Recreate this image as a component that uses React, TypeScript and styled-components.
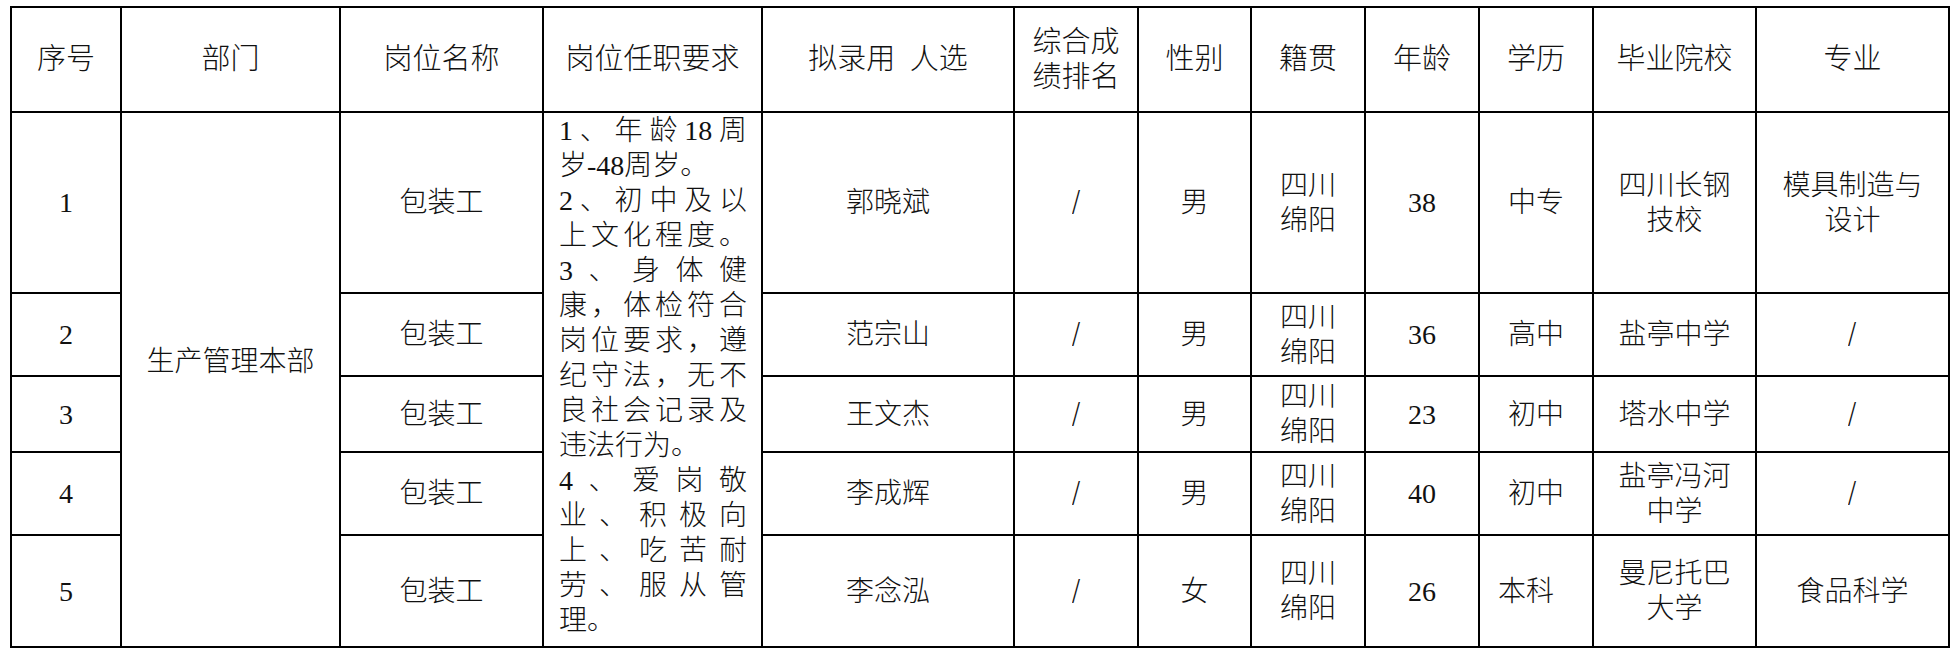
import { Fragment } from "react";
import styled, { createGlobalStyle } from "styled-components";

const GlobalStyle = createGlobalStyle`
  html, body {
    margin: 0;
    padding: 0;
    background: #fff;
  }
  body {
    font-family: "Liberation Serif", "Noto Sans CJK SC", serif;
    color: #111;
  }
`;

const Page = styled.div`
  padding: 6px 0 0 10px;
`;

// black background + 2px gaps draw the ruling of the table
const Sheet = styled.div`
  display: grid;
  grid-template-columns: 108px 217px 201px 217px 250px 122px 111px 112px 112px 112px 161px 191px;
  grid-template-rows: 103px 179px 81px 74px 81px 110px;
  gap: 2px;
  padding: 2px;
  width: max-content;
  background: #000;
  font-size: 28px;
  line-height: 35px;
  font-weight: 300;
`;

const Cell = styled.div<{ $rows?: number; $lift?: number; $shiftLeft?: number }>`
  background: #fff;
  display: flex;
  flex-direction: column;
  align-items: center;
  justify-content: center;
  text-align: center;
  white-space: nowrap;
  grid-row: ${({ $rows }) => ($rows ? `span ${$rows}` : "auto")};
  padding-bottom: ${({ $lift }) => ($lift ? $lift * 2 : 0)}px;
  padding-right: ${({ $shiftLeft }) => ($shiftLeft ? $shiftLeft * 2 : 0)}px;
`;

const HeadCell = styled(Cell)`
  font-size: 29px;
`;

const Slash = styled.span`
  font-family: "Liberation Serif", serif;
  font-size: 36px;
  line-height: 35px;
  transform: scaleX(0.8);
`;

const Requirements = styled.div`
  background: #fff;
  grid-row: span 5;
  display: flex;
  flex-direction: column;
  padding: 0 14px 0 15px;
`;

const ReqLine = styled.div<{ $full?: boolean }>`
  white-space: nowrap;
  text-align: ${({ $full }) => ($full ? "justify" : "left")};
  text-align-last: ${({ $full }) => ($full ? "justify" : "left")};
`;

const headers: string[][] = [
  ["序号"],
  ["部门"],
  ["岗位名称"],
  ["岗位任职要求"],
  ["拟录用\u2002人选"],
  ["综合成", "绩排名"],
  ["性别"],
  ["籍贯"],
  ["年龄"],
  ["学历"],
  ["毕业院校"],
  ["专业"],
];

const reqLines: [string, boolean][] = [
  ["1、年龄18周", true],
  ["岁-48周岁。", false],
  ["2、初中及以", true],
  ["上文化程度。", true],
  ["3、身体健", true],
  ["康，体检符合", true],
  ["岗位要求，遵", true],
  ["纪守法，无不", true],
  ["良社会记录及", true],
  ["违法行为。", false],
  ["4、爱岗敬", true],
  ["业、积极向", true],
  ["上、吃苦耐", true],
  ["劳、服从管", true],
  ["理。", false],
];

interface Hire {
  no: string;
  name: string;
  sex: string;
  age: string;
  edu: string;
  school: string[];
  major: string[];
}

const hires: Hire[] = [
  { no: "1", name: "郭晓斌", sex: "男", age: "38", edu: "中专", school: ["四川长钢", "技校"], major: ["模具制造与", "设计"] },
  { no: "2", name: "范宗山", sex: "男", age: "36", edu: "高中", school: ["盐亭中学"], major: ["/"] },
  { no: "3", name: "王文杰", sex: "男", age: "23", edu: "初中", school: ["塔水中学"], major: ["/"] },
  { no: "4", name: "李成辉", sex: "男", age: "40", edu: "初中", school: ["盐亭冯河", "中学"], major: ["/"] },
  { no: "5", name: "李念泓", sex: "女", age: "26", edu: "本科", school: ["曼尼托巴", "大学"], major: ["食品科学"] },
];

const Lines = ({ items }: { items: string[] }) => (
  <>
    {items.map((t, i) =>
      t === "/" ? <Slash key={i}>/</Slash> : <span key={i}>{t}</span>
    )}
  </>
);

const App = () => {
  return (
    <Page>
      <GlobalStyle />
      <Sheet>
        {headers.map((h, i) => (
          <HeadCell key={"h" + i}>
            <Lines items={h} />
          </HeadCell>
        ))}

        {hires.map((p, i) => (
          <Fragment key={p.no}>
            <Cell>{p.no}</Cell>
            {i === 0 && (
              <Cell $rows={5} $lift={18}>
                生产管理本部
              </Cell>
            )}
            <Cell>包装工</Cell>
            {i === 0 && (
              <Requirements>
                {reqLines.map(([t, full], j) => (
                  <ReqLine key={j} $full={full}>
                    {t}
                  </ReqLine>
                ))}
              </Requirements>
            )}
            <Cell>{p.name}</Cell>
            <Cell>
              <Slash>/</Slash>
            </Cell>
            <Cell>{p.sex}</Cell>
            <Cell>
              <Lines items={["四川", "绵阳"]} />
            </Cell>
            <Cell>{p.age}</Cell>
            <Cell $shiftLeft={p.edu === "本科" ? 10 : 0}>{p.edu}</Cell>
            <Cell>
              <Lines items={p.school} />
            </Cell>
            <Cell>
              <Lines items={p.major} />
            </Cell>
          </Fragment>
        ))}
      </Sheet>
    </Page>
  );
};

export default App;
